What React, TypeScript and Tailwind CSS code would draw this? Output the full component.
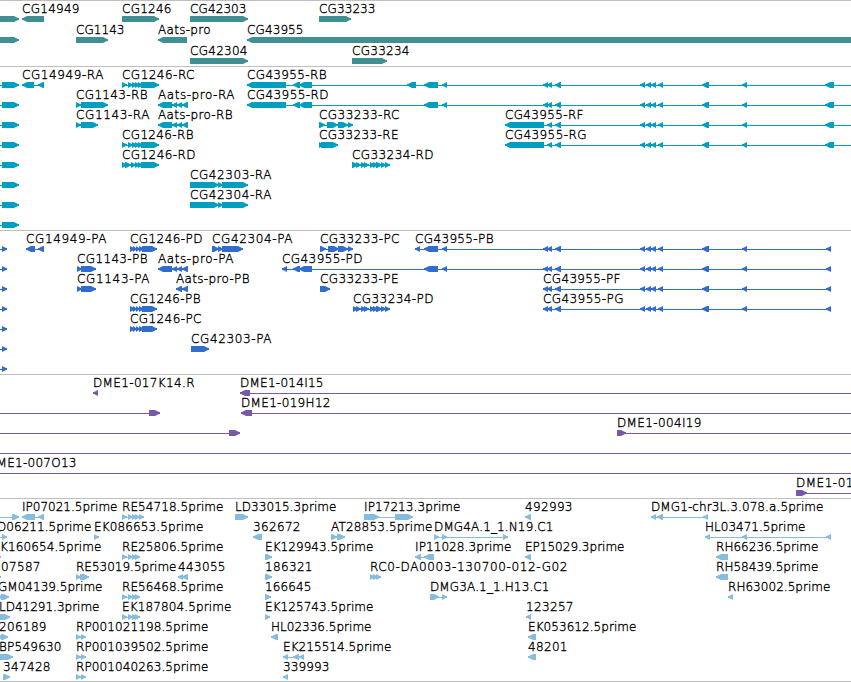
type Direction = 'r' | 'l'
type Span = [number, number]

interface Feature {
  label?: string
  // horizontal extent of the label
  at?: Span
  dir: Direction
  blocks: Span[]
  // connector drawn behind the blocks
  line?: Span
}

interface TrackData {
  name: string
  color: string
  frame: string
  rowClass: string
  rows: Feature[][]
}

function f(dir: Direction, blocks: Span[], label?: string, at?: Span, line?: Span): Feature {
  return { dir, blocks, label, at, line }
}

const EDGE = 851

// exons shared by several transcripts
const cg1246: Span[] = [[122, 127], [128, 133], [132, 137], [135, 140], [138, 143], [141, 159]]
const cg1246d: Span[] = [[122, 127], [125, 131], [131, 136], [135, 140], [138, 143], [141, 159]]
const cg1246p: Span[] = [[130, 135], [133, 137], [136, 140], [139, 144], [142, 157]]
const aats: Span[] = [[158, 172], [172, 177], [177, 182], [182, 188]]
const cg33233: Span[] = [[319, 325], [327, 338], [338, 348], [348, 353]]
const cg33234: Span[] = [[352, 358], [356, 361], [361, 366], [364, 369], [370, 375], [373, 378], [376, 382], [381, 386], [385, 390]]
const tail: Span[] = [[547, 552], [555, 561], [640, 645], [646, 651], [651, 656], [658, 663], [702, 709], [742, 747]]
const middle: Span[] = [[424, 438], [442, 447], [543, 548]]
const front: Span[] = [[293, 300], [299, 312]]
const re: Span[] = [[122, 127], [128, 133], [132, 137], [135, 140]]

const rnaStart = f('r', [[2, 19]], undefined, undefined, [0, 3])
const proteinStart = f('r', [[2, 7]], undefined, undefined, [0, 3])

const tracks: TrackData[] = [
  {
    name: 'genes',
    color: '#408f92',
    frame: 'h-[66px]',
    rowClass: 'h-[21px]',
    rows: [
      [
        f('r', [[-5, 19]]),
        f('l', [[22, 44]], 'CG14949', [22, 79]),
        f('r', [[122, 159]], 'CG1246', [122, 171]),
        f('r', [[190, 248]], 'CG42303', [190, 246]),
        f('r', [[319, 351]], 'CG33233', [319, 375]),
      ],
      [
        f('r', [[-5, 19]]),
        f('r', [[76, 108]], 'CG1143', [76, 124]),
        f('l', [[158, 187]], 'Aats-pro', [158, 210]),
        f('l', [[247, 860]], 'CG43955', [247, 303]),
      ],
      [
        f('r', [[190, 248]], 'CG42304', [190, 247]),
        f('r', [[352, 387]], 'CG33234', [352, 409]),
      ],
    ],
  },
  {
    name: 'transcripts',
    color: '#009fbf',
    frame: 'h-[164px]',
    rowClass: 'h-5',
    rows: [
      [
        rnaStart,
        f('l', [[22, 34], [38, 44]], 'CG14949-RA', [22, 103]),
        f('r', cg1246, 'CG1246-RC', [122, 194]),
        f('l', [[247, 286], ...front, [407, 416], ...middle, ...tail, [825, 834]], 'CG43955-RB', [247, 326], [247, EDGE]),
      ],
      [
        rnaStart,
        f('r', [[76, 81], [81, 108]], 'CG1143-RB', [76, 147]),
        f('l', aats, 'Aats-pro-RA', [158, 234]),
        f('l', [[247, 286], ...front, ...middle, ...tail, [825, 834]], 'CG43955-RD', [247, 328], [247, EDGE]),
      ],
      [
        rnaStart,
        f('r', [[76, 81], [81, 98]], 'CG1143-RA', [76, 149]),
        f('l', aats, 'Aats-pro-RB', [158, 232]),
        f('r', cg33233, 'CG33233-RC', [319, 399]),
        f('l', [[505, 544], ...tail, [825, 834]], 'CG43955-RF', [505, 583], [505, EDGE]),
      ],
      [
        rnaStart,
        f('r', cg1246, 'CG1246-RB', [122, 193]),
        f('r', [[319, 324], [321, 338]], 'CG33233-RE', [319, 398]),
        f('l', [[505, 544], ...tail, [825, 834]], 'CG43955-RG', [505, 586], [505, EDGE]),
      ],
      [
        rnaStart,
        f('r', cg1246d, 'CG1246-RD', [122, 195]),
        f('r', cg33234, 'CG33234-RD', [352, 433]),
      ],
      [rnaStart, f('r', [[190, 219], [218, 223], [222, 248]], 'CG42303-RA', [190, 271])],
      [rnaStart, f('r', [[190, 219], [218, 223], [222, 248]], 'CG42304-RA', [190, 271])],
      [rnaStart],
    ],
  },
  {
    name: 'proteins',
    color: '#316dcc',
    frame: 'h-36',
    rowClass: 'h-5',
    rows: [
      [
        proteinStart,
        f('l', [[26, 35], [38, 44]], 'CG14949-PA', [26, 106]),
        f('r', cg1246p, 'CG1246-PD', [130, 202]),
        f('r', [[212, 219], [218, 223], [222, 243]], 'CG42304-PA', [212, 292]),
        f('r', [[320, 326], [328, 339], [338, 348], [348, 353]], 'CG33233-PC', [320, 399]),
        f('l', [[415, 420], ...middle, ...tail, [826, 831]], 'CG43955-PB', [415, 493]),
      ],
      [
        proteinStart,
        f('r', [[77, 82], [81, 96]], 'CG1143-PB', [77, 147]),
        f('l', aats, 'Aats-pro-PA', [158, 233]),
        f('l', [[282, 287], ...front, ...middle, ...tail, [826, 831]], 'CG43955-PD', [282, 362]),
      ],
      [
        proteinStart,
        f('r', [[77, 82], [81, 96]], 'CG1143-PA', [77, 149]),
        f('l', [[176, 182], [182, 188]], 'Aats-pro-PB', [176, 249]),
        f('r', [[320, 330]], 'CG33233-PE', [320, 398]),
        f('l', [[543, 548], ...tail, [826, 831]], 'CG43955-PF', [543, 620]),
      ],
      [
        proteinStart,
        f('r', cg1246p, 'CG1246-PB', [130, 200]),
        f('r', [[353, 358], ...cg33234.slice(1)], 'CG33234-PD', [353, 433]),
        f('l', [[543, 548], ...tail, [826, 831]], 'CG43955-PG', [543, 623]),
      ],
      [proteinStart, f('r', cg1246p, 'CG1246-PC', [130, 201])],
      [proteinStart, f('r', [[191, 209]], 'CG42303-PA', [191, 271])],
      [proteinStart],
    ],
  },
  {
    name: 'clones',
    color: '#7759a8',
    frame: 'h-[124px]',
    rowClass: 'h-5',
    rows: [
      [
        f('l', [[93, 98]], 'DME1-017K14.R', [93, 194]),
        f('l', [[240, 250]], 'DME1-014I15', [240, 323], [240, EDGE]),
      ],
      [
        f('r', [[149, 160]], undefined, undefined, [0, 159]),
        f('l', [[241, 252]], 'DME1-019H12', [241, 330], [241, EDGE]),
      ],
      [
        f('r', [[229, 240]], undefined, undefined, [0, 239]),
        f('r', [[617, 626]], 'DME1-004I19', [617, 701], [617, EDGE]),
      ],
      [f('r', [], undefined, undefined, [0, EDGE])],
      [f('r', [], 'DME1-007O13', [-13, 76], [0, EDGE])],
      [f('r', [[796, 807]], 'DME1-01', [796, 853], [796, EDGE])],
    ],
  },
  {
    name: 'ests',
    color: '#87bcdd',
    frame: 'h-[183px]',
    rowClass: 'h-5',
    rows: [
      [
        f('r', [[12, 19]], undefined, undefined, [0, 18]),
        f('l', [[22, 35], [38, 44]], 'IP07021.5prime', [22, 117]),
        f('r', [...re, [139, 144]], 'RE54718.5prime', [122, 223]),
        f('r', [[235, 248]], 'LD33015.3prime', [235, 336]),
        f('r', [[364, 379], [395, 413]], 'IP17213.3prime', [364, 460]),
        f('l', [[525, 531]], '492993', [525, 572]),
        f('l', [[651, 656], [657, 663], [703, 708]], 'DMG1-chr3L.3.078.a.5prime', [651, 823]),
      ],
      [
        f('r', [[2, 7]], 'D06211.5prime', [-3, 91], [0, 4]),
        f('r', [[94, 99]], 'EK086653.5prime', [94, 203]),
        f('l', [[253, 262]], '362672', [253, 300]),
        f('r', [[331, 337], [337, 345]], 'AT28853.5prime', [331, 432]),
        f('r', [[434, 439], [442, 447], [503, 508]], 'DMG4A.1_1.N19.C1', [434, 553]),
        f('l', [[705, 710], [742, 747], [826, 831]], 'HL03471.5prime', [705, 805]),
      ],
      [
        f('r', [[-4, 1]], 'K160654.5prime', [0, 101]),
        f('r', re, 'RE25806.5prime', [122, 223]),
        f('r', [[265, 272]], 'EK129943.5prime', [265, 373]),
        f('l', [[415, 421], [424, 434]], 'IP11028.3prime', [415, 511]),
        f('l', [[525, 531]], 'EP15029.3prime', [525, 624]),
        f('l', [[716, 728]], 'RH66236.5prime', [716, 818]),
      ],
      [
        f('r', [[-4, 1]], '07587', [1, 40]),
        f('r', [[76, 81], [80, 89]], 'RE53019.5prime', [76, 176]),
        f('l', [[178, 183], [182, 188]], '443055', [178, 225]),
        f('r', [[265, 272]], '186321', [265, 312]),
        f('r', [[370, 375], [373, 378], [376, 381]], 'RC0-DA0003-130700-012-G02', [370, 567]),
        f('l', [[716, 728]], 'RH58439.5prime', [716, 818]),
      ],
      [
        f('r', [[-3, 3], [1, 9]], 'GM04139.5prime', [-2, 102]),
        f('r', re, 'RE56468.5prime', [122, 223]),
        f('r', [[265, 271]], '166645', [265, 311]),
        f('r', [[430, 439], [442, 447]], 'DMG3A.1_1.H13.C1', [430, 549]),
        f('l', [[728, 733]], 'RH63002.5prime', [728, 830]),
      ],
      [
        f('r', [[-3, 10]], 'LD41291.3prime', [-1, 99]),
        f('r', re, 'EK187804.5prime', [122, 231]),
        f('r', [[265, 270]], 'EK125743.5prime', [265, 373]),
        f('l', [[526, 531]], '123257', [526, 573]),
      ],
      [
        f('r', [[-5, 3], [1, 8]], '206189', [-1, 46]),
        f('r', [[76, 81], [81, 86]], 'RP001021198.5prime', [76, 208]),
        f('l', [[271, 278]], 'HL02336.5prime', [271, 371]),
        f('l', [[528, 536]], 'EK053612.5prime', [528, 636]),
      ],
      [
        f('r', [[-3, 13]], 'BP549630', [-1, 61]),
        f('r', [[76, 81], [81, 86]], 'RP001039502.5prime', [76, 208]),
        f('l', [[283, 288], [293, 299], [299, 304]], 'EK215514.5prime', [283, 391]),
        f('l', [[528, 536]], '48201', [528, 567]),
      ],
      [
        f('r', [[3, 10]], '347428', [3, 50]),
        f('r', [[76, 81], [81, 86]], 'RP001040263.5prime', [76, 208]),
        f('l', [[283, 288]], '339993', [283, 329]),
      ],
    ],
  },
]

// box with a blunt arrow head on the side the feature reads towards
function arrow([x0, x1]: Span, dir: Direction) {
  const head = Math.min(5, x1 - x0)
  const tip = dir === 'r' ? x1 : x0
  const base = dir === 'r' ? x0 : x1
  const s = dir === 'r' ? -1 : 1
  return [
    [base, 13],
    [tip + s * head, 13],
    [tip + s, 15],
    [tip, 15],
    [tip, 17],
    [tip + s, 17],
    [tip + s * head, 19],
    [base, 19],
  ].join(' ')
}

function Glyph({ feature, color }: { feature: Feature; color: string }) {
  const { blocks, dir, label, at } = feature
  const line = feature.line ?? (blocks.length > 1 ? [blocks[0][0] + 2, blocks[blocks.length - 1][1] - 2] : null)

  return (
    <g fill={color}>
      {line && <rect x={line[0]} y={16} width={line[1] - line[0]} height={1} />}
      {blocks.map((block, i) => (
        <polygon key={i} points={arrow(block, dir)} />
      ))}
      {label && at && (
        <text
          x={at[0]}
          y={10}
          textLength={at[1] - at[0] + 0.5}
          className="fill-black stroke-black [stroke-width:0.35px]"
        >
          {label}
        </text>
      )}
    </g>
  )
}

function Track({ track }: { track: TrackData }) {
  return (
    <section aria-label={track.name} className={`flex flex-col border-t border-[#bfbfbf] pt-0.5 ${track.frame}`}>
      {track.rows.map((row, i) => (
        <svg key={i} className={`block w-full shrink-0 ${track.rowClass}`}>
          {row.map((feature, j) => (
            <Glyph key={j} feature={feature} color={track.color} />
          ))}
        </svg>
      ))}
    </section>
  )
}

export default function App() {
  return (
    <main className="h-[682px] w-[851px] overflow-hidden border-b border-[#bfbfbf] bg-white font-['DejaVu_Sans',sans-serif] text-[12px] font-extralight">
      {tracks.map((track) => (
        <Track key={track.name} track={track} />
      ))}
    </main>
  )
}
